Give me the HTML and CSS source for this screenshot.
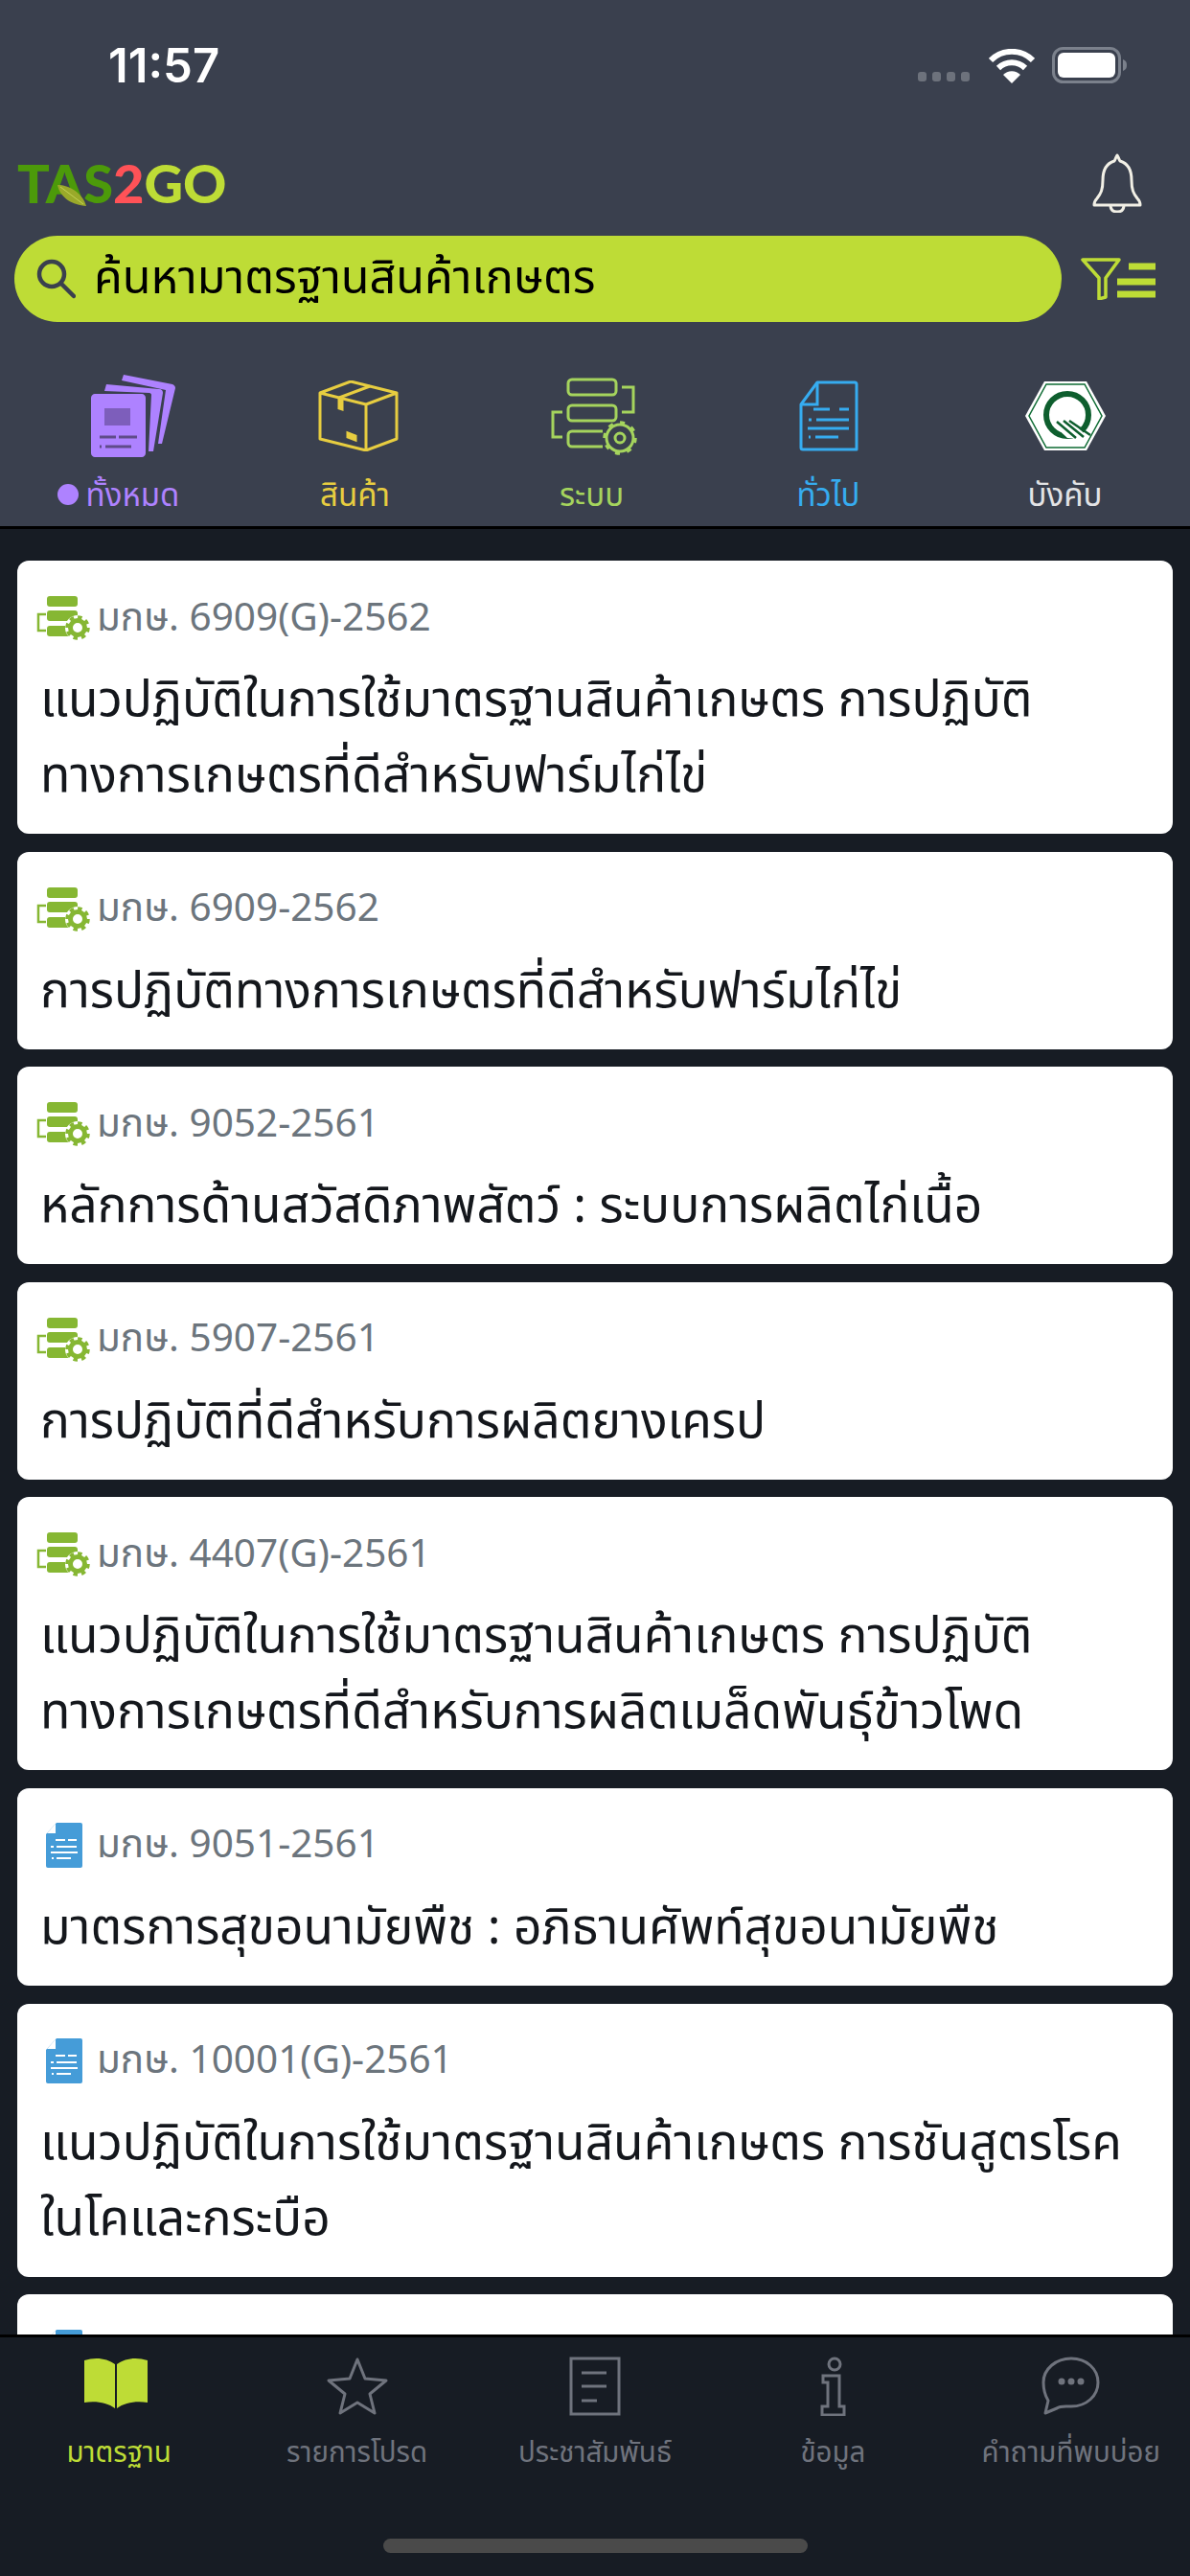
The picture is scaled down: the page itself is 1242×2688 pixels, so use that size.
FILE: index.html
```html
<!doctype html>
<html lang="th">
  <head>
    <meta charset="utf-8" />
    <title>TAS2GO</title>
    <meta name="viewport" content="width=device-width, initial-scale=1" />
    <link rel="stylesheet" href="styles.css">
  </head>
  <body>
    <svg class="defs" width="0" height="0">
      <symbol id="i-system" viewBox="0 0 56 46">
        <rect x="11" y="0" width="32" height="11" rx="3" fill="#86b733" />
        <rect x="11" y="15" width="32" height="11" rx="3" fill="#86b733" />
        <rect x="11" y="31" width="24" height="11" rx="3" fill="#86b733" />
        <path d="M10 19H2v17h8" fill="none" stroke="#86b733" stroke-width="2.5" />
        <circle cx="43" cy="33" r="13" fill="#fff" />
        <circle cx="43" cy="33" r="7.5" fill="none" stroke="#86b733" stroke-width="5" />
        <circle cx="43" cy="33" r="11" fill="none" stroke="#86b733" stroke-width="3.5" stroke-dasharray="4.5 4.1" />
      </symbol>
      <symbol id="i-doc" viewBox="0 0 38 47">
        <path d="M11 0H36a2 2 0 0 1 2 2V45a2 2 0 0 1-2 2H2a2 2 0 0 1-2-2V12z" fill="#459cd8" />
        <path d="M10 1V11H1z" fill="#fff" />
        <path d="M10 18h10M23 18h9M5 25h3M11 25h21M5 31h28M6 37h2M11 37h15" fill="none" stroke="#fff" stroke-width="2" />
      </symbol>
    </svg>

    <div class="screen">
      <header class="top">
        <div class="status">
          <span class="time">11:57</span>
          <div class="status-icons">
            <svg class="signal" width="56" height="10" viewBox="0 0 56 10">
              <rect x="0" y="0" width="9" height="10" rx="3" />
              <rect x="15" y="0" width="9" height="10" rx="3" />
              <rect x="30" y="0" width="9" height="10" rx="3" />
              <rect x="45" y="0" width="9" height="10" rx="3" />
            </svg>
            <svg width="48" height="36" viewBox="0 0 48 36">
              <path d="M2 12a31 31 0 0 1 44 0" fill="none" stroke="#fff" stroke-width="6" />
              <path d="M10 20a20 20 0 0 1 28 0" fill="none" stroke="#fff" stroke-width="6" />
              <path d="M24 36l-9-9a12.500 12.500 0 0 1 18 0z" fill="#fff" />
            </svg>
            <svg width="78" height="38" viewBox="0 0 78 38">
              <rect x="1.500" y="1.500" width="69" height="35" rx="10" fill="none" stroke="#7b818c" stroke-width="3" />
              <rect x="6" y="6" width="60" height="26" rx="6" fill="#fff" />
              <path d="M74 13c3 1 4 3 4 6s-1 5-4 6z" fill="#7b818c" />
            </svg>
          </div>
        </div>

        <div class="brand-row">
          <div class="logo">
            <span class="logo-tas">TAS</span><span class="logo-two">2</span><span class="logo-go">GO</span>
            <svg class="leaf" width="30" height="22" viewBox="0 0 30 22">
              <path d="M0 0C12 0 26 8 30 22C16 21 3 14 0 0z" fill="#9aa92a" />
              <path d="M3 2L27 20" stroke="#c3d255" stroke-width="1" />
            </svg>
          </div>
          <svg width="54" height="62" viewBox="0 0 54 62" fill="none" stroke="#f2f0e6" stroke-width="3">
            <path d="M27 2c-2 3-2 5-3 6C14 11 12 19 12 28c0 10-2 14-6 19-3 3-3 5-3 7h48c0-2 0-4-3-7-4-5-6-9-6-19 0-9-2-17-12-20-1-1-1-3-3-6z" stroke-linejoin="round" />
            <path d="M20 54c0 5 3 7 7 7s7-2 7-7" />
          </svg>
        </div>

        <div class="search-row">
          <div class="search">
            <svg width="42" height="42" viewBox="0 0 42 42" fill="none" stroke="#3a404e" stroke-width="4.500" stroke-linecap="round">
              <circle cx="17" cy="16" r="13" />
              <path d="M27 26l13 13" />
            </svg>
            <span>ค้นหามาตรฐานสินค้าเกษตร</span>
          </div>
          <svg width="78" height="44" viewBox="0 0 78 44" fill="none" stroke="#bedc36" stroke-width="3.500">
            <path d="M2 2H40L26 21V41L19 43V21z" stroke-linejoin="round" />
            <path d="M50 9H78M38 25H78M38 38H78" stroke-width="7" />
          </svg>
        </div>

        <nav class="cats">
          <div class="cat cat-all">
            <div class="cat-icon">
              <svg width="90" height="87" viewBox="0 0 90 87">
                <path d="M34 0L85 10c2 1 3 2 3 4L74 72H70L78 16L32 6z" fill="#ae82ff" />
                <path d="M16 10L71 15c3 0 4 2 4 4L65 80H60L63 21c0-1-1-2-2-2L14 17z" fill="#ae82ff" />
                <path d="M4 20H53c2 0 4 2 4 4V82c0 2-2 4-4 4H4c-2 0-4-2-4-4V24c0-2 2-4 4-4z" fill="#ae82ff" />
                <rect x="14" y="35" width="27" height="18" fill="#7d5ebb" />
                <path d="M9 65H26M29 65H48M9 75H11M15 75H42" stroke="#5f4b8a" stroke-width="3" />
              </svg>
            </div>
            <span class="cat-label"><i class="dot"></i>ทั้งหมด</span>
          </div>
          <div class="cat cat-product">
            <div class="cat-icon">
              <svg width="84" height="74" viewBox="0 0 84 74" fill="none" stroke="#e7cd40" stroke-width="3">
                <path d="M2 13L34 1L82 13L50 25zM2 13V61L50 73L82 61V13M50 25V73" stroke-linejoin="round" />
                <path d="M22 18L54 6M22 18V29L25 30V20" />
                <path d="M31 55L39 58V62L31 59z" fill="#e7cd40" />
              </svg>
            </div>
            <span class="cat-label">สินค้า</span>
          </div>
          <div class="cat cat-system">
            <div class="cat-icon">
              <svg width="90" height="81" viewBox="0 0 90 81" fill="none" stroke="#a5d45d" stroke-width="3">
                <rect x="18" y="2" width="50" height="16" rx="4" />
                <rect x="18" y="29" width="50" height="16" rx="4" />
                <path d="M54 56H22a4 4 0 0 0-4 4v8a4 4 0 0 0 4 4H54" />
                <path d="M74 10H86V36H74M12 36H2V62H12" />
                <circle cx="72" cy="63" r="14" />
                <circle cx="72" cy="63" r="5" />
                <circle cx="72" cy="63" r="16" stroke-width="3.500" stroke-dasharray="5 7.500" />
              </svg>
            </div>
            <span class="cat-label">ระบบ</span>
          </div>
          <div class="cat cat-general">
            <div class="cat-icon">
              <svg width="62" height="74" viewBox="0 0 62 74" fill="none" stroke="#36acf0" stroke-width="3">
                <path d="M19 2H58a2 2 0 0 1 2 2V72H4a2 2 0 0 1-2-2V25z" stroke-linejoin="round" />
                <path d="M19 2V25H2" />
                <path d="M15 30H32M42 30H52M10 41H13M18 41H52M9 50H52M10 59H12M17 59H41" />
              </svg>
            </div>
            <span class="cat-label">ทั่วไป</span>
          </div>
          <div class="cat cat-forced">
            <div class="cat-icon">
              <svg width="86" height="74" viewBox="0 0 86 74">
                <path d="M21 1H65L85 37L65 73H21L1 37z" fill="#fff" />
                <path d="M23 4H63L81 37L63 70H23L5 37z" fill="#fff" stroke="#0e6b33" stroke-width="1.500" />
                <circle cx="45" cy="36" r="22" fill="none" stroke="#0e5e2e" stroke-width="6" />
                <path d="M30 46L45 60H68L50 44z" fill="#fff" />
                <path d="M34 43L54 60M41 42L62 59M47 42L69 57" stroke="#0e5e2e" stroke-width="2.500" fill="none" />
              </svg>
            </div>
            <span class="cat-label">บังคับ</span>
          </div>
        </nav>
      </header>

      <main class="list">
        <article class="card">
          <div class="code"><svg class="code-sys"><use href="#i-system" /></svg>มกษ. 6909(G)-2562</div>
          <p class="title">แนวปฏิบัติในการใช้มาตรฐานสินค้าเกษตร การปฏิบัติ<br>ทางการเกษตรที่ดีสำหรับฟาร์มไก่ไข่</p>
        </article>
        <article class="card">
          <div class="code"><svg class="code-sys"><use href="#i-system" /></svg>มกษ. 6909-2562</div>
          <p class="title">การปฏิบัติทางการเกษตรที่ดีสำหรับฟาร์มไก่ไข่</p>
        </article>
        <article class="card">
          <div class="code"><svg class="code-sys"><use href="#i-system" /></svg>มกษ. 9052-2561</div>
          <p class="title">หลักการด้านสวัสดิภาพสัตว์ : ระบบการผลิตไก่เนื้อ</p>
        </article>
        <article class="card">
          <div class="code"><svg class="code-sys"><use href="#i-system" /></svg>มกษ. 5907-2561</div>
          <p class="title">การปฏิบัติที่ดีสำหรับการผลิตยางเครป</p>
        </article>
        <article class="card">
          <div class="code"><svg class="code-sys"><use href="#i-system" /></svg>มกษ. 4407(G)-2561</div>
          <p class="title">แนวปฏิบัติในการใช้มาตรฐานสินค้าเกษตร การปฏิบัติ<br>ทางการเกษตรที่ดีสำหรับการผลิตเมล็ดพันธุ์ข้าวโพด</p>
        </article>
        <article class="card">
          <div class="code"><svg class="code-doc"><use href="#i-doc" /></svg>มกษ. 9051-2561</div>
          <p class="title">มาตรการสุขอนามัยพืช : อภิธานศัพท์สุขอนามัยพืช</p>
        </article>
        <article class="card">
          <div class="code"><svg class="code-doc"><use href="#i-doc" /></svg>มกษ. 10001(G)-2561</div>
          <p class="title">แนวปฏิบัติในการใช้มาตรฐานสินค้าเกษตร การชันสูตรโรค<br>ในโคและกระบือ</p>
        </article>
        <article class="card">
          <div class="code"><svg class="code-doc"><use href="#i-doc" /></svg></div>
        </article>
      </main>

      <footer class="tabs">
        <div class="tab tab-active">
          <svg width="66" height="62" viewBox="0 0 66 62">
            <path d="M0 4C12 0 24 2 32 8V54C24 48 12 46 0 48z" fill="#bedc36" />
            <path d="M66 4C54 0 42 2 34 8V54C42 48 54 46 66 48z" fill="#bedc36" />
          </svg>
          <span>มาตรฐาน</span>
        </div>
        <div class="tab">
          <svg width="66" height="62" viewBox="0 0 66 62" fill="none" stroke="#6f737d" stroke-width="3">
            <path d="M33 3L41 23L63 25L46 39L51 59L33 48L15 59L20 39L3 25L25 23z" stroke-linejoin="round" />
          </svg>
          <span>รายการโปรด</span>
        </div>
        <div class="tab">
          <svg width="66" height="62" viewBox="0 0 66 62" fill="none" stroke="#6f737d" stroke-width="3">
            <rect x="8" y="2" width="50" height="58" />
            <path d="M19 17H45M19 31H45M19 46H35" />
          </svg>
          <span>ประชาสัมพันธ์</span>
        </div>
        <div class="tab">
          <svg width="66" height="62" viewBox="0 0 66 62" fill="none" stroke="#6f737d" stroke-width="3">
            <circle cx="35" cy="8" r="6" />
            <path d="M23 20H40V52H45V61H22V52H28V27H23z" />
          </svg>
          <span>ข้อมูล</span>
        </div>
        <div class="tab">
          <svg width="66" height="62" viewBox="0 0 66 62">
            <path d="M33 2C49 2 61 13 61 27S49 52 33 52c-6 0-11-1-15 2L6 59L9 46C6 41 4 34 4 27C4 13 17 2 33 2z" fill="none" stroke="#6f737d" stroke-width="3" stroke-linejoin="round" />
            <circle cx="23" cy="26" r="3.500" fill="#6f737d" />
            <circle cx="33" cy="26" r="3.500" fill="#6f737d" />
            <circle cx="43" cy="26" r="3.500" fill="#6f737d" />
          </svg>
          <span>คำถามที่พบบ่อย</span>
        </div>
        <div class="home-bar"></div>
      </footer>
    </div>
  </body>
</html>
```

FILE: styles.css
```css
* {
  box-sizing: border-box;
  margin: 0;
  padding: 0;
}

body {
  width: 1242px;
  height: 2688px;
  overflow: hidden;
  background: #171c24;
  font-family: "Noto Sans", "Noto Sans Thai", sans-serif;
}

.defs {
  position: absolute;
}

.screen {
  display: flex;
  flex-direction: column;
  height: 2688px;
}

.top {
  background: #3a404e;
  height: 552px;
  border-bottom: 3px solid #000;
  flex: none;
}

.status {
  display: flex;
  align-items: center;
  justify-content: space-between;
  height: 136px;
  padding: 0 66px 0 113px;
}

.time {
  color: #fff;
  font-family: "Inter", sans-serif;
  font-size: 49px;
  font-weight: 600;
}

.status-icons {
  display: flex;
  align-items: flex-end;
  gap: 18px;
}

.signal {
  margin-bottom: 2px;
  fill: #6d727c;
}

.brand-row {
  display: flex;
  align-items: center;
  justify-content: space-between;
  height: 110px;
  padding: 0 49px 0 18px;
}

.logo {
  position: relative;
  font-family: "Lato", sans-serif;
  font-size: 56px;
  font-weight: 900;
  line-height: 1;
  letter-spacing: 0;
}

.logo-tas {
  color: #4c9a0a;
}

.logo-two {
  color: #ff5257;
}

.logo-go {
  color: #bedc36;
}

.leaf {
  position: absolute;
  left: 42px;
  top: 30px;
}

.search-row {
  display: flex;
  align-items: center;
  gap: 20px;
  padding-left: 15px;
}

.search {
  display: flex;
  align-items: center;
  gap: 19px;
  width: 1093px;
  height: 90px;
  padding-left: 22px;
  border-radius: 45px;
  background: #bedc36;
  font-size: 48.500px;
  color: #000;
}

.cats {
  display: grid;
  grid-template-columns: repeat(5, 247px);
  margin-top: 55px;
}

.cat {
  display: flex;
  flex-direction: column;
  align-items: center;
  gap: 17px;
}

.cat-icon {
  display: flex;
  align-items: center;
  height: 86px;
}

.cat-all .cat-icon {
  padding-left: 32px;
}

.cat-product .cat-icon {
  padding-left: 6px;
}

.cat-system .cat-icon {
  padding-left: 4px;
}

.cat-label {
  display: flex;
  align-items: center;
  gap: 8px;
  font-size: 33px;
  line-height: 44px;
}

.dot {
  width: 22px;
  height: 22px;
  border-radius: 50%;
  background: #ae82ff;
}

.cat-all {
  color: #ae82ff;
}

.cat-product {
  color: #e7cd40;
}

.cat-system {
  color: #a5d45d;
}

.cat-general {
  color: #36acf0;
}

.cat-forced {
  color: #e2e3e5;
}

.list {
  flex: 1;
  min-height: 0;
  overflow: hidden;
  display: flex;
  flex-direction: column;
  gap: 18.600px;
  padding: 33px 18px 0;
}

.card {
  flex: none;
  padding: 27px 24px 24px 24px;
  border-radius: 12px;
  background: #fff;
}

.code {
  display: flex;
  align-items: center;
  height: 66px;
  margin-bottom: 10px;
  color: #6c757d;
  font-size: 40.500px;
}

.code-sys {
  flex: none;
  width: 56px;
  height: 46px;
  margin: 0 7px 0 -4px;
}

.code-doc {
  flex: none;
  width: 38px;
  height: 47px;
  margin: 0 15px 0 6px;
}

.title {
  color: #14171c;
  font-size: 51.500px;
  line-height: 79px;
}

.tabs {
  flex: none;
  position: relative;
  display: grid;
  grid-template-columns: repeat(5, 1fr);
  align-content: start;
  height: 252px;
  padding-top: 20px;
  background: #171c24;
  border-top: 3px solid #000;
}

.tab {
  display: flex;
  flex-direction: column;
  align-items: center;
  gap: 17px;
  color: #6f737d;
  font-size: 29.500px;
  line-height: 40px;
  white-space: nowrap;
}

.tab-active {
  color: #bedc36;
}

.tab-active svg {
  margin-right: 6px;
}

.home-bar {
  position: absolute;
  left: 400px;
  bottom: 24px;
  width: 443px;
  height: 15px;
  border-radius: 8px;
  background: #4a4a4a;
}
```
